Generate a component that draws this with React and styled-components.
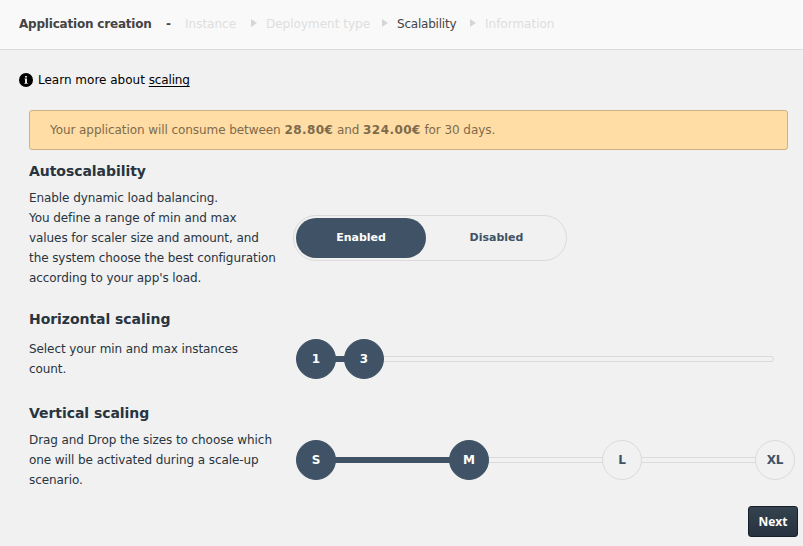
import React from 'react';
import styled, { createGlobalStyle } from 'styled-components';

const Global = createGlobalStyle`
  * { box-sizing: border-box; }
  body {
    margin: 0;
    background: #f1f1f1;
    font: 12px/20px Verdana, "DejaVu Sans", sans-serif;
    letter-spacing: -0.08px;
    color: #28343f;
  }
`;

const Page = styled.div`
  height: 546px;
  overflow: hidden;
`;

const Header = styled.header`
  height: 50px;
  padding: 14px 19px 0;
  display: flex;
  background: #f9f9f9;
  border-bottom: 1px solid #dcdcdc;
`;

const Title = styled.strong`
  width: 147px;
  color: #444;
  letter-spacing: -0.2px;
`;

const Dash = styled.span`
  width: 19px;
  color: #444;
  font-weight: bold;
`;

const Step = styled.span`
  width: ${(p) => p.$width}px;
  white-space: nowrap;
  color: ${(p) => (p.$active ? '#444' : '#dedede')};
  letter-spacing: ${(p) => (p.$active ? '-0.22px' : '0')};
`;

const Arrow = styled.span`
  width: 6px;
  height: 8px;
  margin: 5px 9px 0 0;
  background: #d6d6d6;
  clip-path: polygon(0 0, 100% 50%, 0 100%);
`;

const Learn = styled.div`
  height: 20px;
  margin: 20px 0 0 19px;
  display: flex;
  align-items: center;
  color: #000;
  letter-spacing: 0;
  svg { margin-right: 5px; }
`;

const Link = styled.a`
  color: #000;
  text-decoration: underline;
  text-underline-offset: 2px;
  letter-spacing: -0.15px;
`;

const Alert = styled.div`
  height: 40px;
  margin: 20px 15px 0 29px;
  padding: 9px 20px;
  border: 1px solid #cdb182;
  border-radius: 3px;
  background: #ffdda5;
  color: #7d6b4c;
  letter-spacing: -0.07px;
  b { letter-spacing: 0.42px; }
`;

const Section = styled.section`
  height: ${(p) => p.$height}px;
  padding: ${(p) => p.$top || 0}px 0 0 29px;
`;

const Heading = styled.h2`
  height: 20px;
  margin: 0 0 ${(p) => p.$gap}px;
  font-size: 14px;
  line-height: 20px;
  letter-spacing: -0.05px;
`;

const Row = styled.div`
  display: flex;
  align-items: center;
`;

const Description = styled.p`
  width: ${(p) => (p.$wide ? 264 : 267)}px;
  margin: 0;
  white-space: nowrap;
`;

const Toggle = styled.div`
  width: 274px;
  height: 46px;
  padding: 2px 0 2px 2px;
  display: flex;
  border: 1px solid #dadada;
  border-radius: 23px;
`;

const Option = styled.button`
  flex: none;
  width: ${(p) => (p.$active ? 130 : 141)}px;
  height: 40px;
  padding: 0;
  border: 0;
  border-radius: 20px;
  background: ${(p) => (p.$active ? '#405265' : 'transparent')};
  color: ${(p) => (p.$active ? '#fff' : '#405265')};
  font: bold 11px/20px Verdana, "DejaVu Sans", sans-serif;
  letter-spacing: 0;
`;

const Knob = styled.span`
  position: relative;
  z-index: 1;
  flex: none;
  width: 40px;
  height: 40px;
  display: grid;
  place-items: center;
  border: 1px solid ${(p) => (p.$on ? '#405265' : '#dadada')};
  border-radius: 50%;
  background: ${(p) => (p.$on ? '#405265' : '#f1f1f1')};
  color: ${(p) => (p.$on ? '#fff' : '#405265')};
  font-weight: bold;
`;

const Rail = styled.span`
  flex: none;
  width: ${(p) => p.$width}px;
  height: 6px;
  margin: 0 -1px;
  border: solid ${(p) => (p.$on ? '#405265' : '#dadada')};
  border-width: ${(p) => (p.$end ? '1px 1px 1px 0' : '1px 0')};
  border-radius: ${(p) => (p.$end ? '0 3px 3px 0' : '0')};
  background: ${(p) => (p.$on ? '#405265' : 'transparent')};
`;

const Footer = styled.footer`
  display: flex;
  justify-content: flex-end;
  padding-right: 5px;
`;

const Next = styled.button`
  width: 50px;
  height: 31px;
  padding: 0;
  border: 1px solid #17202a;
  border-radius: 3px;
  background: linear-gradient(#34434f, #27323f);
  color: #fff;
  font: bold 12px/20px "Open Sans", sans-serif;
`;

export default function App() {
  return (
    <Page>
      <Global />
      <Header>
        <Title>Application creation</Title>
        <Dash>-</Dash>
        <Step $width={66}>Instance</Step>
        <Arrow />
        <Step $width={116}>Deployment type</Step>
        <Arrow />
        <Step $width={73} $active>Scalability</Step>
        <Arrow />
        <Step $width={72}>Information</Step>
      </Header>
      <Learn>
        <svg width="14" height="14" viewBox="0 0 14 14">
          <circle cx="7" cy="7" r="7" fill="#000" />
          <path d="M6 3h2v1.5H6zM5.5 5.5H8V10h.8v.8H5.3V10H6V6.3h-.5z" fill="#e6e6e6" />
        </svg>
        <span>Learn more about <Link>scaling</Link></span>
      </Learn>
      <Alert>
        Your application will consume between <b>28.80€</b> and <b>324.00€</b> for 30 days.
      </Alert>
      <Section $height={159} $top={11}>
        <Heading $gap={7}>Autoscalability</Heading>
        <Row>
          <Description $wide>
            Enable dynamic load balancing.<br />
            You define a range of min and max<br />
            values for scaler size and amount, and<br />
            the system choose the best configuration<br />
            according to your app's load.
          </Description>
          <Toggle>
            <Option $active>Enabled</Option>
            <Option>Disabled</Option>
          </Toggle>
        </Row>
      </Section>
      <Section $height={94}>
        <Heading $gap={10}>Horizontal scaling</Heading>
        <Row>
          <Description>
            Select your min and max instances<br />
            count.
          </Description>
          <Knob $on>1</Knob>
          <Rail $width={10} $on />
          <Knob $on>3</Knob>
          <Rail $width={391} $end />
        </Row>
      </Section>
      <Section $height={103}>
        <Heading $gap={7}>Vertical scaling</Heading>
        <Row>
          <Description>
            Drag and Drop the sizes to choose which<br />
            one will be activated during a scale-up<br />
            scenario.
          </Description>
          <Knob $on>S</Knob>
          <Rail $width={115} $on />
          <Knob $on>M</Knob>
          <Rail $width={115} />
          <Knob>L</Knob>
          <Rail $width={115} />
          <Knob>XL</Knob>
        </Row>
      </Section>
      <Footer>
        <Next>Next</Next>
      </Footer>
    </Page>
  );
}
